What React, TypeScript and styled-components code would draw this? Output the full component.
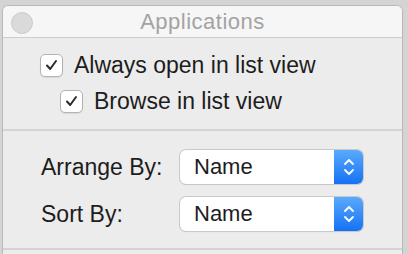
import React from 'react';
import styled, { createGlobalStyle } from 'styled-components';

const GlobalStyle = createGlobalStyle`
  html, body {
    margin: 0;
    padding: 0;
    background: #d4d4d4;
    height: 254px;
    overflow: hidden;
  }
  body {
    font-family: "Liberation Sans", Arial, sans-serif;
  }
`;

const Window = styled.div`
  margin: 5px 0 0 2px;
  width: 399px;
  height: 260px;
  border: 1px solid #b8b8b8;
  border-bottom: none;
  border-radius: 6px 6px 0 0;
  background: #ececec;
  overflow: hidden;
`;

const TitleBar = styled.div`
  position: relative;
  height: 31px;
  background: #f6f6f6;
  border-bottom: 1px solid #cdcdcd;
  display: flex;
  align-items: center;
  justify-content: center;
`;

const Light = styled.div`
  position: absolute;
  left: 8px;
  top: 6px;
  width: 20px;
  height: 20px;
  border-radius: 50%;
  background: #dadada;
  border: 1px solid #cbcbcb;
`;

const Title = styled.div`
  font-size: 22px;
  color: #a3a3a3;
  letter-spacing: 0.5px;
`;

const Section = styled.div<{ $h: number }>`
  height: ${(p) => p.$h}px;
  border-bottom: 2px solid #d4d4d4;
  box-sizing: border-box;
`;

const Checks = styled.div`
  display: flex;
  flex-direction: column;
  gap: 13px;
  padding: 16px 0 0 37px;
`;

const CheckRow = styled.label<{ $indent?: number }>`
  display: flex;
  align-items: center;
  gap: 11px;
  margin-left: ${(p) => p.$indent || 0}px;
  font-size: 23px;
  line-height: 23px;
  color: #1d1d1d;
`;

const Box = styled.span`
  width: 21px;
  height: 21px;
  border: 1px solid #b3b3b3;
  border-radius: 5px;
  background: #fff;
  box-shadow: 0 1px 1px rgba(0, 0, 0, 0.08);
  display: flex;
  align-items: center;
  justify-content: center;
`;

const Form = styled.div`
  display: grid;
  grid-template-columns: 139px 183px;
  row-gap: 13px;
  align-items: center;
  padding: 19px 0 0 38px;
`;

const Label = styled.div`
  font-size: 23px;
  color: #1d1d1d;
`;

const Popup = styled.div`
  height: 34px;
  display: flex;
  border-radius: 6px;
  background: #fff;
  box-shadow: 0 0 0 1px #c9c9c9, 0 1px 1px rgba(0, 0, 0, 0.15);
  overflow: hidden;
`;

const PopupText = styled.div`
  flex: 1;
  display: flex;
  align-items: center;
  padding-left: 14px;
  font-size: 22px;
  color: #1d1d1d;
`;

const Stepper = styled.div`
  width: 29px;
  background: linear-gradient(#5aaafd, #1572f3);
  display: flex;
  align-items: center;
  justify-content: center;
`;

function Check() {
  return (
    <Box>
      <svg width="15" height="15" viewBox="0 0 15 15">
        <path d="M3 7.5 L6.2 11 L12 3" fill="none" stroke="#2b2b2b" strokeWidth="2" strokeLinecap="round" strokeLinejoin="round" />
      </svg>
    </Box>
  );
}

function Chevrons() {
  return (
    <svg width="14" height="22" viewBox="0 0 14 22">
      <path d="M3 8 L7 4 L11 8 M3 14 L7 18 L11 14" fill="none" stroke="#fff" strokeWidth="1.8" strokeLinecap="round" strokeLinejoin="round" />
    </svg>
  );
}

function Select({ value }: { value: string }) {
  return (
    <Popup>
      <PopupText>{value}</PopupText>
      <Stepper><Chevrons /></Stepper>
    </Popup>
  );
}

export default function App() {
  return (
    <>
      <GlobalStyle />
      <Window>
        <TitleBar>
          <Light />
          <Title>Applications</Title>
        </TitleBar>
        <Section $h={93}>
          <Checks>
            <CheckRow><Check />Always open in list view</CheckRow>
            <CheckRow $indent={20}><Check />Browse in list view</CheckRow>
          </Checks>
        </Section>
        <Section $h={119}>
          <Form>
            <Label>Arrange By:</Label>
            <Select value="Name" />
            <Label>Sort By:</Label>
            <Select value="Name" />
          </Form>
        </Section>
      </Window>
    </>
  );
}
